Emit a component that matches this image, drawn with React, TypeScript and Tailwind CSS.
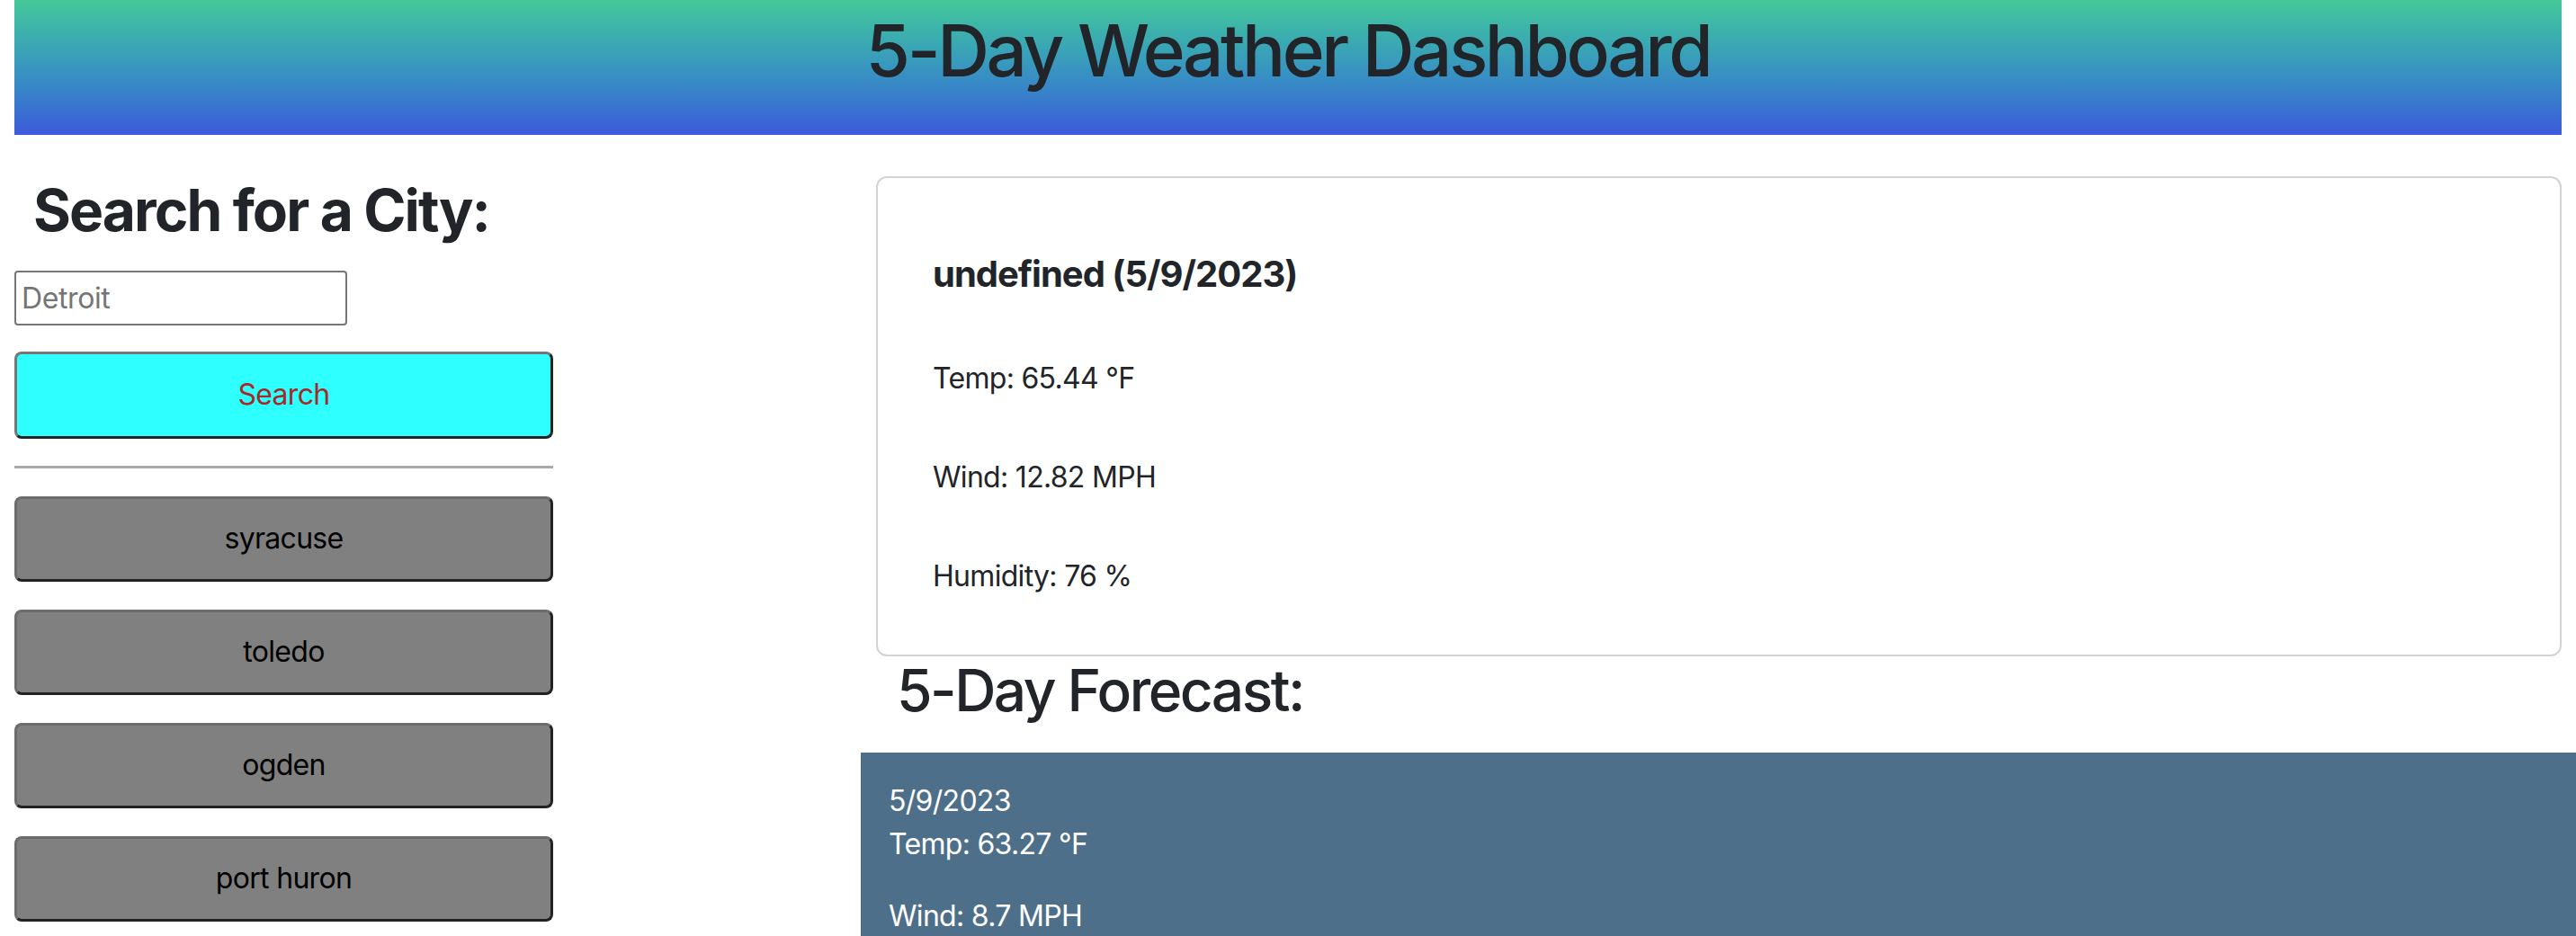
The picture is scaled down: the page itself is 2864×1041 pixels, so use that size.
import React from "react";

const CITIES = ["syracuse", "toledo", "ogden", "port huron"];

const current = {
  city: "undefined",
  date: "5/9/2023",
  temp: "65.44",
  wind: "12.82",
  humidity: "76",
};

const forecast = [{ date: "5/9/2023", temp: "63.27", wind: "8.7" }];

export default function App() {
  return (
    <div
      className="min-h-screen w-full overflow-hidden bg-white tracking-[-0.7px] text-[#212529]"
      style={{ fontFamily: "Inter, 'Noto Sans', sans-serif" }}
    >
      {/* Header */}
      <header className="mx-4 h-[150px] bg-gradient-to-b from-[#44c897] to-[#3d59db]">
        <h1 className="pt-[8px] text-center text-[80px] font-medium leading-[1.2] tracking-[-3.4px] text-[#212529]">
          5-Day Weather Dashboard
        </h1>
      </header>

      <div className="flex pl-4">
        {/* Search column */}
        <aside className="flex w-[599px] shrink-0 flex-col">
          <h2 className="mt-[46px] pl-[21px] text-[64px] font-bold leading-[1.2] tracking-[-1.9px]">
            Search for a City:
          </h2>
          <input
            type="text"
            placeholder="Detroit"
            className="mt-[28px] h-[61px] w-[370px] rounded-[4px] border-2 border-[#767676] px-[6px] text-[32px] tracking-[-0.4px] placeholder:text-[#757575]"
          />
          <button className="mt-[29px] h-[97px] w-full rounded-[8px] border-[3px] border-t-[#767676] border-l-[#767676] border-r-[#222222] border-b-[#222222] bg-[#2effff] text-[32px] text-[#a52a2a]">
            Search
          </button>
          <hr className="mt-[30px] border-t-[3px] border-[#a9a9a9]" />
          <div className="mt-[31px] flex flex-col gap-[31px]">
            {CITIES.map((city) => (
              <button
                key={city}
                className="h-[95px] w-full rounded-[8px] border-[3px] border-t-[#6c6c6c] border-l-[#6c6c6c] border-r-[#222222] border-b-[#222222] bg-[#808080] text-[32px] text-black"
              >
                {city}
              </button>
            ))}
          </div>
        </aside>

        {/* Weather column */}
        <main className="ml-[342px] flex min-w-0 flex-1 flex-col">
          <section className="ml-[17px] mr-4 mt-[46px] rounded-[12px] border-2 border-[#d3d3d3] pb-[63px] pl-[61px] pt-[83px]">
            <h3 className="text-[40px] font-bold leading-[1.2] tracking-[-1px]">
              {current.city} ({current.date})
            </h3>
            <div className="mt-[68px] flex flex-col gap-[62px] text-[32px] leading-[48px]">
              <p>Temp: {current.temp} °F</p>
              <p>Wind: {current.wind} MPH</p>
              <p>Humidity: {current.humidity} %</p>
            </div>
          </section>

          <h2 className="pl-[40px] text-[64px] font-medium leading-[1.2] tracking-[-2.5px]">
            5-Day Forecast:
          </h2>

          <div className="mt-[30px] bg-[#4e6f8a] pl-[31px] pt-[30px] pb-[32px] text-[32px] leading-[48px] text-white">
            {forecast.map((day) => (
              <div key={day.date}>
                <div>{day.date}</div>
                <p className="mb-[32px]">Temp: {day.temp} °F</p>
                <p>Wind: {day.wind} MPH</p>
              </div>
            ))}
          </div>
        </main>
      </div>
    </div>
  );
}
